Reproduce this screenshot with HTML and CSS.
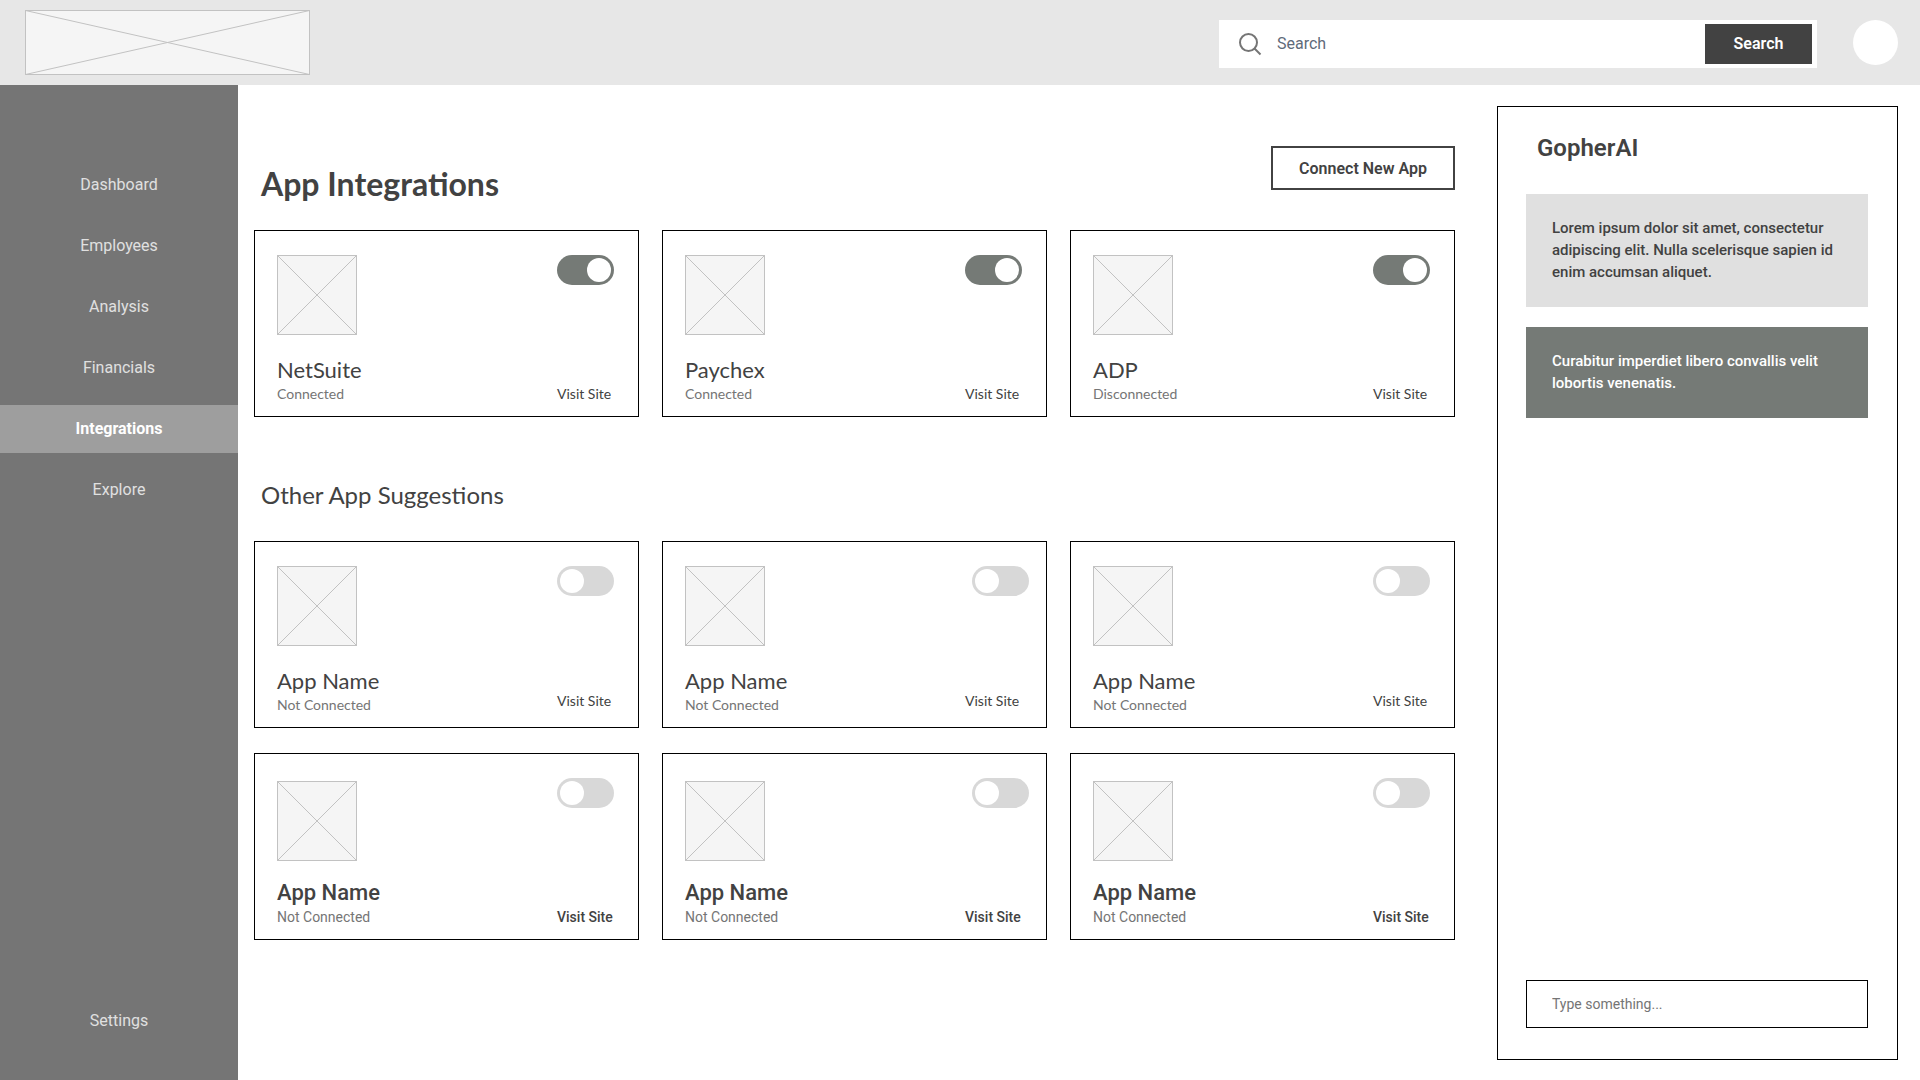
FILE: index.html
```html
<!DOCTYPE html>
<html lang="en">
<head>
  <meta charset="UTF-8" />
  <meta name="viewport" content="width=device-width, initial-scale=1.0"/>
  <title>App Integrations</title>
  <link rel="stylesheet" href="styles.css">
</head>
<body>

  <!-- shared crossed box used for every app image -->
  <svg class="sprite" aria-hidden="true">
    <symbol id="thumb" viewBox="0 0 80 80">
      <rect x="0.5" y="0.5" width="79" height="79" />
      <path d="M0.5 0.5L79.5 79.5M79.5 0.5L0.5 79.5" />
    </symbol>
  </svg>

  <header class="topbar">
    <a class="logo" href="#" aria-label="Home">
      <svg class="placeholder" width="285" height="65" viewBox="0 0 285 65">
        <rect x="0.5" y="0.5" width="284" height="64" />
        <path d="M0.5 0.5L284.5 64.5M284.5 0.5L0.5 64.5" />
      </svg>
    </a>
    <form class="search">
      <label for="search" aria-label="Search">
        <svg width="24" height="24" viewBox="0 0 24 24" fill="none" stroke="#757575" stroke-width="2">
          <circle cx="10.5" cy="10.5" r="8.5" />
          <path d="M16.5 16.5L22.5 22.5" />
        </svg>
      </label>
      <input type="text" id="search" placeholder="Search" />
      <button type="button">Search</button>
    </form>
    <a class="profile" href="#" aria-label="Profile"></a>
  </header>

  <div class="shell">
    <nav class="sidebar">
      <a href="#">Dashboard</a>
      <a href="#">Employees</a>
      <a href="#">Analysis</a>
      <a href="#">Financials</a>
      <a href="#" class="active">Integrations</a>
      <a href="#">Explore</a>
      <a href="#" class="settings">Settings</a>
    </nav>

    <main class="content">
      <div class="content-head">
        <h1>App Integrations</h1>
        <button class="connect" type="button">Connect New App</button>
      </div>

      <section class="cards">
        <article class="card">
          <svg class="placeholder thumb"><use href="#thumb" /></svg>
          <input type="checkbox" class="toggle" aria-label="NetSuite" checked />
          <div class="info">
            <h3>NetSuite</h3>
            <p>Connected</p>
          </div>
          <a class="visit" href="#">Visit Site</a>
        </article>
        <article class="card">
          <svg class="placeholder thumb"><use href="#thumb" /></svg>
          <input type="checkbox" class="toggle" aria-label="Paychex" checked />
          <div class="info">
            <h3>Paychex</h3>
            <p>Connected</p>
          </div>
          <a class="visit" href="#">Visit Site</a>
        </article>
        <article class="card">
          <svg class="placeholder thumb"><use href="#thumb" /></svg>
          <input type="checkbox" class="toggle" aria-label="ADP" checked />
          <div class="info">
            <h3>ADP</h3>
            <p>Disconnected</p>
          </div>
          <a class="visit" href="#">Visit Site</a>
        </article>
      </section>

      <h2>Other App Suggestions</h2>

      <section class="cards">
        <article class="card raised">
          <svg class="placeholder thumb"><use href="#thumb" /></svg>
          <input type="checkbox" class="toggle" aria-label="App Name" />
          <div class="info">
            <h3>App Name</h3>
            <p>Not Connected</p>
          </div>
          <a class="visit" href="#">Visit Site</a>
        </article>
        <article class="card raised wide">
          <svg class="placeholder thumb"><use href="#thumb" /></svg>
          <input type="checkbox" class="toggle" aria-label="App Name" />
          <div class="info">
            <h3>App Name</h3>
            <p>Not Connected</p>
          </div>
          <a class="visit" href="#">Visit Site</a>
        </article>
        <article class="card raised">
          <svg class="placeholder thumb"><use href="#thumb" /></svg>
          <input type="checkbox" class="toggle" aria-label="App Name" />
          <div class="info">
            <h3>App Name</h3>
            <p>Not Connected</p>
          </div>
          <a class="visit" href="#">Visit Site</a>
        </article>

        <article class="card strong">
          <svg class="placeholder thumb"><use href="#thumb" /></svg>
          <input type="checkbox" class="toggle" aria-label="App Name" />
          <div class="info">
            <h3>App Name</h3>
            <p>Not Connected</p>
          </div>
          <a class="visit" href="#">Visit Site</a>
        </article>
        <article class="card strong wide">
          <svg class="placeholder thumb"><use href="#thumb" /></svg>
          <input type="checkbox" class="toggle" aria-label="App Name" />
          <div class="info">
            <h3>App Name</h3>
            <p>Not Connected</p>
          </div>
          <a class="visit" href="#">Visit Site</a>
        </article>
        <article class="card strong">
          <svg class="placeholder thumb"><use href="#thumb" /></svg>
          <input type="checkbox" class="toggle" aria-label="App Name" />
          <div class="info">
            <h3>App Name</h3>
            <p>Not Connected</p>
          </div>
          <a class="visit" href="#">Visit Site</a>
        </article>
      </section>
    </main>

    <aside class="assistant">
      <h2>GopherAI</h2>
      <p class="message">Lorem ipsum dolor sit amet, consectetur adipiscing elit. Nulla scelerisque sapien id enim accumsan aliquet.</p>
      <p class="message reply">Curabitur imperdiet libero convallis velit lobortis venenatis.</p>
      <input type="text" class="prompt" aria-label="Message" placeholder="Type something..." />
    </aside>
  </div>

</body>
</html>
```

FILE: styles.css
```css
:root {
  --dark: #424242;
  --green: #757a76;
  --muted: #757575;
  --line: #000000;
  --roboto: Roboto, sans-serif;
  --lato: Lato, sans-serif;
}

* {
  box-sizing: border-box;
}

body {
  margin: 0;
  min-height: 100vh;
  display: flex;
  flex-direction: column;
  font-family: var(--roboto);
  font-size: 16px;
  color: var(--dark);
  background: #ffffff;
}

h1, h2, h3, p {
  margin: 0;
}

a {
  color: inherit;
  text-decoration: none;
}

button, input {
  font-family: inherit;
  font-size: inherit;
  border-radius: 0;
}

button {
  cursor: pointer;
}

.sprite {
  display: none;
}

.placeholder {
  display: block;
  fill: #f5f5f5;
  stroke: #c2c2c2;
}

/* top bar */

.topbar {
  display: flex;
  align-items: center;
  height: 85px;
  padding: 0 22px 0 25px;
  background: #e7e7e7;
}

.search {
  display: flex;
  align-items: center;
  width: 598px;
  height: 48px;
  margin: 2px 36px 0 auto;
  padding: 4px 5px 4px 19px;
  background: #ffffff;
}

.search label, .search svg {
  display: block;
}

.search input {
  flex: 1;
  min-width: 0;
  padding: 0 15px;
  border: none;
  outline: none;
  background: none;
}

.search input::placeholder {
  color: #5f6b7a;
  opacity: 1;
}

.search button {
  width: 107px;
  height: 40px;
  border: none;
  background: var(--dark);
  color: #ffffff;
  font-weight: 600;
}

.profile {
  width: 45px;
  height: 45px;
  border-radius: 50%;
  background: #ffffff;
}

/* page columns */

.shell {
  flex: 1;
  display: flex;
}

.sidebar {
  display: flex;
  flex-direction: column;
  gap: 13px;
  width: 238px;
  padding: 76px 0 35px;
  background: #757575;
  color: #e0e0e0;
}

.sidebar a {
  line-height: 48px;
  text-align: center;
}

.sidebar .active {
  background: #9e9e9e;
  color: #ffffff;
  font-weight: 700;
}

.sidebar .settings {
  margin-top: auto;
}

.content {
  flex: 1;
  padding: 61px 42px 40px 16px;
  font-family: var(--lato);
}

.content-head {
  display: flex;
  justify-content: space-between;
  align-items: flex-start;
  margin-bottom: 26px;
}

h1 {
  padding: 18px 0 0 7px;
  font-size: 32px;
  line-height: 40px;
}

.content h2 {
  margin: 63px 0 31px;
  padding-left: 7px;
  font-size: 24px;
  font-weight: 400;
  line-height: 30px;
}

.connect {
  width: 184px;
  height: 44px;
  border: 2px solid var(--dark);
  background: #ffffff;
  color: var(--dark);
  font-family: var(--roboto);
  font-weight: 600;
}

/* app cards */

.cards {
  display: grid;
  grid-template-columns: repeat(3, 1fr);
  gap: 25px 23px;
}

.card {
  display: grid;
  grid-template-columns: 1fr 57px;
  row-gap: 21px;
  padding: 24px 24px 12px 22px;
  border: 1px solid var(--line);
}

.thumb {
  width: 80px;
  height: 80px;
}

.toggle {
  appearance: none;
  justify-self: end;
  width: 57px;
  height: 30px;
  margin: 0;
  padding: 3px;
  border-radius: 15px;
  background: #d8d8d8;
  cursor: pointer;
}

.toggle::before {
  content: "";
  display: block;
  width: 24px;
  height: 24px;
  border-radius: 50%;
  background: #ffffff;
}

.toggle:checked {
  background: var(--green);
}

.toggle:checked::before {
  margin-left: auto;
}

.info h3 {
  font-size: 22px;
  font-weight: 400;
  line-height: 28px;
}

.info p {
  color: var(--muted);
  font-size: 14px;
  line-height: 20px;
}

.visit {
  align-self: end;
  font-size: 14px;
  line-height: 20px;
  white-space: nowrap;
}

.raised .visit {
  margin-bottom: 4px;
}

.wide {
  grid-template-columns: 1fr 64px;
  padding-right: 17px;
}

.strong {
  row-gap: 18px;
  font-family: var(--roboto);
}

.strong .thumb {
  margin-top: 3px;
}

.strong h3, .strong .visit {
  font-weight: 500;
}

/* assistant panel */

.assistant {
  display: flex;
  flex-direction: column;
  width: 401px;
  margin: 21px 22px 20px 0;
  padding: 26px 29px 31px 28px;
  border: 1px solid var(--line);
}

.assistant h2 {
  margin-bottom: 31px;
  padding-left: 11px;
  font-size: 24px;
  font-weight: 600;
  line-height: 30px;
}

.message {
  margin-bottom: 20px;
  padding: 23px 26px 24px;
  background: #e0e0e0;
  font-size: 15px;
  font-weight: 500;
  line-height: 22px;
}

.reply {
  background: var(--green);
  color: #ffffff;
}

.prompt {
  height: 48px;
  margin-top: auto;
  padding: 0 25px;
  border: 1px solid var(--line);
  font-size: 14px;
}

.prompt::placeholder {
  color: var(--muted);
  opacity: 1;
}
```
